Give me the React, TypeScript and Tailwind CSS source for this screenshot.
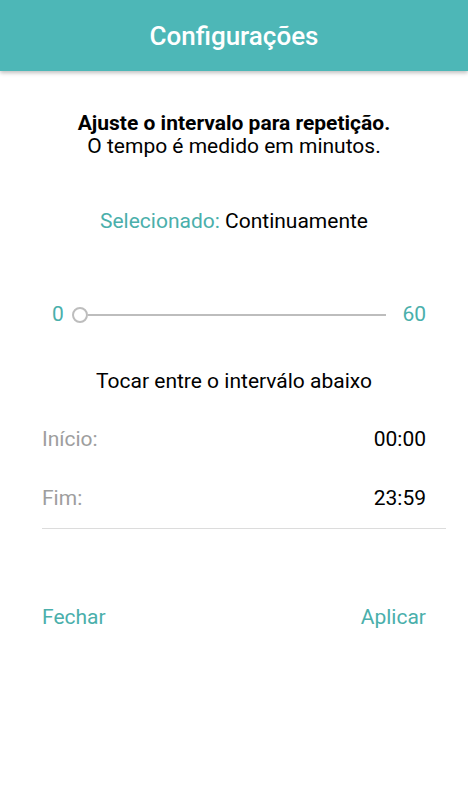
import React from 'react';

const App: React.FC = () => {
  return (
    <div className="min-h-[800px] bg-white font-['Roboto',sans-serif]">
      {/* Header */}
      <div className="h-[71px] bg-[#4db7b7] flex items-center justify-center shadow-[0_2px_4px_rgba(0,0,0,0.25)]">
        <h1 className="text-[26px] font-medium text-white leading-none">Configurações</h1>
      </div>

      <div className="px-[42px]">
        {/* Intro */}
        <div className="mt-[41px] text-center text-[21px] leading-[23px] text-black">
          <div className="font-bold">Ajuste o intervalo para repetição.</div>
          <div>O tempo é medido em minutos.</div>
        </div>

        {/* Selected */}
        <div className="mt-[52px] text-center text-[21px] leading-[23px]">
          <span className="text-[#4aafab]">Selecionado: </span>
          <span className="text-black">Continuamente</span>
        </div>

        {/* Slider */}
        <div className="mt-[70px] h-[24px] flex items-center text-[21px] text-[#4aafab]">
          <span className="ml-[10px]">0</span>
          <div className="flex-1 flex items-center ml-[8px] mr-[16px]">
            <div className="w-[16px] h-[16px] rounded-full border-2 border-[#bdbdbd] bg-white shrink-0" />
            <div className="flex-1 h-[2px] bg-[#bdbdbd]" />
          </div>
          <span>60</span>
        </div>

        {/* Range */}
        <div className="mt-[43px] text-center text-[21px] leading-[23px] text-black">
          Tocar entre o interválo abaixo
        </div>

        <div className="mt-[35px] text-[21px] leading-[23px]">
          <div className="flex justify-between">
            <span className="text-[#9e9e9e]">Início:</span>
            <span className="text-black">00:00</span>
          </div>
          <div className="flex justify-between mt-[36px]">
            <span className="text-[#9e9e9e]">Fim:</span>
            <span className="text-black">23:59</span>
          </div>
        </div>

        <div className="mt-[18px] -mr-[20px] h-px bg-[#dcdcdc]" />

        {/* Actions */}
        <div className="mt-[77px] flex justify-between text-[21px] leading-[23px] text-[#4aafab]">
          <button>Fechar</button>
          <button>Aplicar</button>
        </div>
      </div>
    </div>
  );
};

export default App;
